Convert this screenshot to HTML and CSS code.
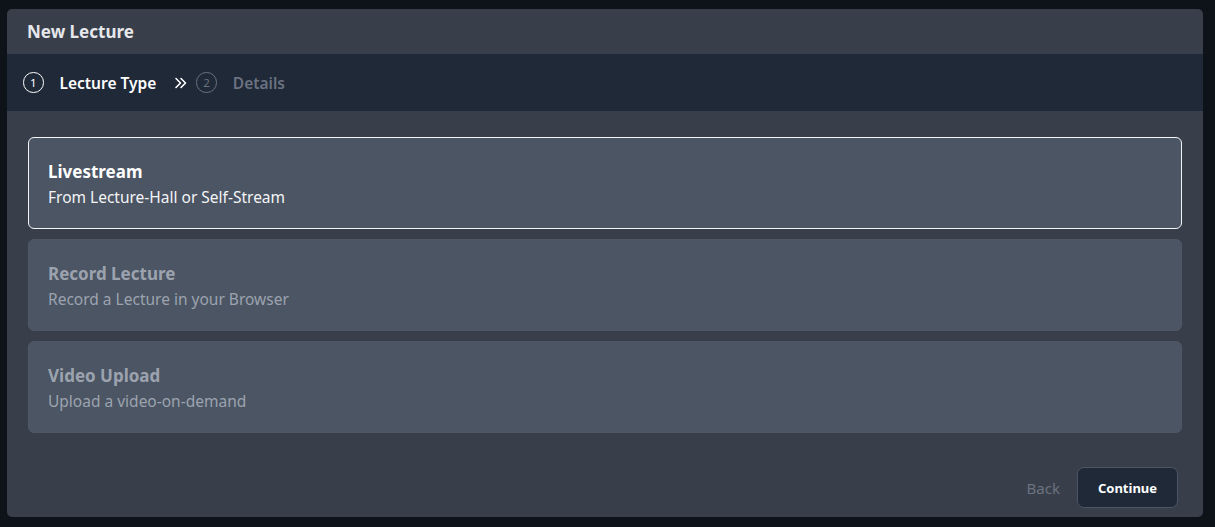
FILE: index.html
```html
<!DOCTYPE html>
<html>
<head>
<meta charset="utf-8">
<link rel="stylesheet" href="styles.css">
</head>
<body>
<div class="modal">
  <div class="modal-header">New Lecture</div>
  <div class="steps">
    <div class="step active">
      <span class="circle">1</span>
      <span class="step-label">Lecture Type</span>
    </div>
    <svg class="chev" width="14" height="14" viewBox="0 0 14 14" fill="none" stroke="#fff" stroke-width="1.6" stroke-linecap="round" stroke-linejoin="round"><path d="M2 2.5l4.5 4.5-4.5 4.5"/><path d="M7 2.5l4.5 4.5-4.5 4.5"/></svg>
    <div class="step">
      <span class="circle">2</span>
      <span class="step-label">Details</span>
    </div>
  </div>
  <div class="content">
    <div class="card selected">
      <div class="card-title">Livestream</div>
      <div class="card-sub">From Lecture-Hall or Self-Stream</div>
    </div>
    <div class="card disabled">
      <div class="card-title">Record Lecture</div>
      <div class="card-sub">Record a Lecture in your Browser</div>
    </div>
    <div class="card disabled">
      <div class="card-title">Video Upload</div>
      <div class="card-sub">Upload a video-on-demand</div>
    </div>
  </div>
  <div class="footer">
    <span class="back">Back</span>
    <button class="continue">Continue</button>
  </div>
</div>
</body>
</html>
```
FILE: styles.css
```css
html, body {
  margin: 0;
  padding: 0;
  background: #0e1219;
  font-family: "Noto Sans", "Open Sans", sans-serif;
}
body {
  padding: 9px 12px 10px 7px;
  height: 527px;
  box-sizing: border-box;
}
.modal {
  background: #383f4a;
  border-radius: 5px;
  overflow: hidden;
  height: 508px;
  display: flex;
  flex-direction: column;
}
.modal-header {
  height: 45px;
  display: flex;
  align-items: center;
  padding-left: 20px;
  font-weight: 700;
  font-size: 17px;
  color: #e5e7eb;
}
.steps {
  height: 57px;
  background: #1f2937;
  display: flex;
  align-items: center;
  padding-left: 16px;
}
.step {
  display: flex;
  align-items: center;
}
.circle {
  width: 18.5px;
  height: 18.5px;
  border: 1.5px solid #fff;
  border-radius: 50%;
  display: flex;
  align-items: center;
  justify-content: center;
  font-size: 11.5px;
  color: #fff;
  box-sizing: content-box;
}
.step-label {
  margin-left: 16px;
  font-size: 15.5px;
  font-weight: 600;
  color: #fff;
}
.chev {
  margin: 0 8px 0 18px;
}
.step:not(.active) .circle {
  border-color: #6b7280;
  color: #6b7280;
}
.step:not(.active) .step-label {
  color: #6b7280;
}
.content {
  padding: 26px 21px 0 21px;
  display: flex;
  flex-direction: column;
  gap: 10px;
  flex: 1;
}
.card {
  background: #4b5563;
  border: 1px solid #4f5866;
  border-radius: 6px;
  height: 92px;
  box-sizing: border-box;
  padding: 4px 19px 0 19px;
  display: flex;
  flex-direction: column;
  justify-content: center;
}
.card.selected {
  border-color: #f3f4f6;
}
.card-title {
  font-size: 17px;
  font-weight: 700;
  color: #fff;
  line-height: 24px;
  margin-top: -3px;
  margin-bottom: 2px;
}
.card-sub {
  font-size: 15.5px;
  color: #f3f4f6;
  line-height: 22px;
}
.card.disabled .card-title,
.card.disabled .card-sub {
  color: #9ca3af;
}
.footer {
  display: flex;
  justify-content: flex-end;
  align-items: center;
  padding: 0 25px 9px 0;
}
.back {
  color: #6b7280;
  font-size: 15px;
  margin-right: 17px;
}
.continue {
  background: #1f2937;
  border: 1px solid #4b5563;
  border-radius: 7px;
  color: #fff;
  font-family: inherit;
  font-weight: 700;
  font-size: 13px;
  width: 101px;
  height: 41px;
}
```
